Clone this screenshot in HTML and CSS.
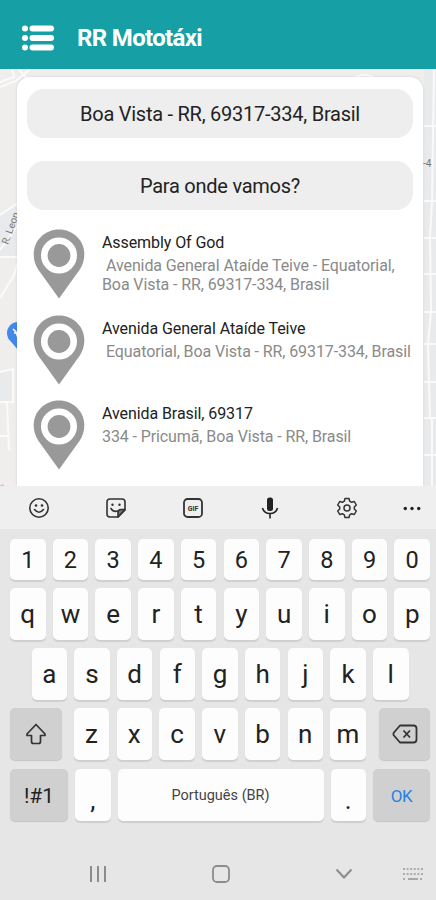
FILE: index.html
```html
<!DOCTYPE html>
<html lang="pt-BR">
<head>
    <meta charset="UTF-8">
    <meta name="viewport" content="width=device-width, initial-scale=1.0">
    <title>RR Mototáxi</title>
    <link rel="stylesheet" href="styles.css">
</head>
<body>

    <!-- Pin shape shared by the address list -->
    <svg class="defs" width="0" height="0">
        <symbol id="pin" viewBox="0 0 52 70">
            <path fill="#999" d="M26 0.5C12 0.5 0.7 11.3 0.7 25.3C0.7 31 2.3 36 5.2 40.5L26 69.5L46.8 40.5C49.7 36 51.3 31 51.3 25.3C51.3 11.3 40 0.5 26 0.5Z"/>
            <circle cx="26" cy="26.5" r="14.7" fill="#999" stroke="#fff" stroke-width="6.6"/>
        </symbol>
    </svg>

    <header class="top-bar">
        <svg class="menu-icon" width="34" height="28" viewBox="0 0 34 28" fill="#fff">
            <circle cx="4" cy="4.5" r="3"/><rect x="8.500" y="1.5" width="24.500" height="6" rx="3"/>
            <circle cx="4" cy="14" r="3"/><rect x="8.500" y="11" width="24.500" height="6" rx="3"/>
            <circle cx="4" cy="23.5" r="3"/><rect x="8.500" y="20.5" width="24.500" height="6" rx="3"/>
        </svg>
        <h1>RR Mototáxi</h1>
    </header>

    <main class="map-area">
        <!-- Streets behind the card -->
        <svg class="map" width="436" height="417" viewBox="0 69 436 417">
            <rect y="69" width="436" height="417" fill="#efeeed"/>
            <path fill="#e9eaec" d="M0 216L18 203V257H0ZM0 372L13 369V402H0ZM424 69H436V486H424Z"/>
            <g fill="none" stroke="#fafafa" stroke-width="2">
                <path d="M0 87L16 81L30 69M0 82L14 77L12 69M19 69L28 80M0 215L18 203M0 257H18M0 298L14 275L18 262M0 250L18 225"/>
                <path d="M0 372L13 369V402H0M7 402L9 450M0 436H8"/>
                <path d="M436 126H424M436 201H424M436 238H424M436 274H424M436 312H424M436 344H424M436 382H424M436 418H424M436 455H424"/>
                <path d="M434 69L432 201L430 238L431 312L428 344L430 418M432 418V486M352 79Q365 71 376 79"/>
            </g>
            <path stroke="#f0b8b8" stroke-width="1.5" d="M0 486L4 485"/>
            <circle cx="18" cy="333" r="11" fill="#4388ea"/>
            <path fill="#4388ea" d="M8 338L18 350V334Z"/>
            <path fill="none" stroke="#fff" stroke-width="1.5" d="M13 329L16 332L18 338M14 333H18"/>
            <text class="street" transform="translate(8 245) rotate(-70)">R. Leop</text>
            <text class="street" x="423" y="167">-4</text>
        </svg>

        <section class="search-card">
            <div class="field">Boa Vista - RR, 69317-334, Brasil</div>
            <div class="field field-to">Para onde vamos?</div>

            <ul class="places">
                <li>
                    <svg class="pin"><use href="#pin"/></svg>
                    <div class="place-text">
                        <h2>Assembly Of God</h2>
                        <p class="indent">Avenida General Ataíde Teive - Equatorial,</p>
                        <p class="line-2">Boa Vista - RR, 69317-334, Brasil</p>
                    </div>
                </li>
                <li>
                    <svg class="pin"><use href="#pin"/></svg>
                    <div class="place-text">
                        <h2>Avenida General Ataíde Teive</h2>
                        <p class="indent">Equatorial, Boa Vista - RR, 69317-334, Brasil</p>
                    </div>
                </li>
                <li>
                    <svg class="pin"><use href="#pin"/></svg>
                    <div class="place-text">
                        <h2>Avenida Brasil, 69317</h2>
                        <p>334 - Pricumã, Boa Vista - RR, Brasil</p>
                    </div>
                </li>
            </ul>
        </section>
    </main>

    <div class="toolbar">
        <svg width="22" height="22" viewBox="0 0 22 22" fill="none" stroke="#333" stroke-width="1.6">
            <circle cx="11" cy="11" r="9.2"/>
            <path d="M6.5 12.5Q11 18 15.5 12.5" stroke-linecap="round"/>
            <circle cx="8" cy="8.5" r="1.3" fill="#333" stroke="none"/><circle cx="14" cy="8.5" r="1.3" fill="#333" stroke="none"/>
        </svg>
        <svg width="22" height="22" viewBox="0 0 22 22" fill="none" stroke="#333" stroke-width="1.6">
            <path d="M5 2H17Q20 2 20 5V13L13 20H5Q2 20 2 17V5Q2 2 5 2Z" stroke-linejoin="round"/>
            <path d="M20 12.5H16Q13 12.5 13 15.5V20Z" fill="#777" stroke-linejoin="round"/>
            <path d="M6 11.5Q8.5 15.5 12.5 14" stroke-linecap="round"/>
            <circle cx="7.5" cy="7.8" r="1.2" fill="#333" stroke="none"/><circle cx="14.5" cy="7.8" r="1.2" fill="#333" stroke="none"/>
        </svg>
        <svg width="22" height="22" viewBox="0 0 22 22">
            <rect x="2" y="2" width="18" height="18" rx="3.5" fill="none" stroke="#333" stroke-width="1.8"/>
            <text class="gif" x="11" y="13.5" text-anchor="middle">GIF</text>
        </svg>
        <svg width="22" height="22" viewBox="0 0 22 22" fill="none" stroke="#222" stroke-width="1.6">
            <rect x="8" y="0.5" width="6" height="13.5" rx="2.5" fill="#222" stroke="none"/>
            <path d="M3.5 11Q5 16.5 11 16.5T18.5 11M11 16.5V21.5"/>
        </svg>
        <svg width="22" height="22" viewBox="0 0 22 22" fill="none" stroke="#333" stroke-width="1.5">
            <path stroke-linejoin="round" d="M9 1.5H13L13.7 4.2L15.6 5.3L18.3 4.5L20.3 8L18.3 10V12L20.3 14L18.3 17.5L15.6 16.7L13.7 17.8L13 20.5H9L8.3 17.8L6.4 16.7L3.7 17.5L1.7 14L3.7 12V10L1.7 8L3.7 4.5L6.4 5.3L8.3 4.2Z"/>
            <circle cx="11" cy="11" r="3"/>
        </svg>
        <svg class="more" width="22" height="22" viewBox="0 0 22 22" fill="#222">
            <circle cx="4.300" cy="11.5" r="1.7"/><circle cx="11" cy="11.5" r="1.7"/><circle cx="17.700" cy="11.5" r="1.7"/>
        </svg>
    </div>

    <div class="keyboard">
        <div class="row numbers">
            <span class="key">1</span><span class="key">2</span><span class="key">3</span><span class="key">4</span><span class="key">5</span><span class="key">6</span><span class="key">7</span><span class="key">8</span><span class="key">9</span><span class="key">0</span>
        </div>
        <div class="row">
            <span class="key">q</span><span class="key">w</span><span class="key">e</span><span class="key">r</span><span class="key">t</span><span class="key">y</span><span class="key">u</span><span class="key">i</span><span class="key">o</span><span class="key">p</span>
        </div>
        <div class="row middle">
            <span class="key">a</span><span class="key">s</span><span class="key">d</span><span class="key">f</span><span class="key">g</span><span class="key">h</span><span class="key">j</span><span class="key">k</span><span class="key">l</span>
        </div>
        <div class="row">
            <span class="key dark shift">
                <svg width="22" height="24" viewBox="0 0 22 24" fill="none" stroke="#333" stroke-width="1.7" stroke-linejoin="round">
                    <path d="M11 2.5L20 12V13.5H15.5V19.500Q15.5 21.500 13.500 21.500H8.500Q6.500 21.500 6.500 19.500V13.5H2V12Z"/>
                </svg>
            </span>
            <span class="key">z</span><span class="key">x</span><span class="key">c</span><span class="key">v</span><span class="key">b</span><span class="key">n</span><span class="key">m</span>
            <span class="key dark backspace">
                <svg width="26" height="20" viewBox="0 0 26 20" fill="none" stroke="#333" stroke-width="1.8" stroke-linejoin="round">
                    <path d="M8 1.5H21.5Q24.5 1.5 24.5 4.5V15.5Q24.5 18.5 21.5 18.5H8L1.5 11V9Z"/>
                    <path d="M11.5 6.5L18 13.5M18 6.5L11.5 13.5"/>
                </svg>
            </span>
        </div>
        <div class="row">
            <span class="key dark symbols">!#1</span>
            <span class="key punct">,</span>
            <span class="key space">Português (BR)</span>
            <span class="key punct">.</span>
            <span class="key dark ok">OK</span>
        </div>
    </div>

    <nav class="nav-bar">
        <svg width="18" height="18" viewBox="0 0 18 18" stroke="#8c8c8c" stroke-width="2"><path d="M2 1V17M9 1V17M16 1V17"/></svg>
        <svg width="20" height="20" viewBox="0 0 20 20" fill="none" stroke="#8c8c8c" stroke-width="1.800"><rect x="2" y="2" width="16" height="16" rx="4"/></svg>
        <svg width="18" height="12" viewBox="0 0 18 12" fill="none" stroke="#8c8c8c" stroke-width="2"><path d="M1.5 1.5L9 9.5L16.5 1.5"/></svg>
        <svg class="keyboard-icon" width="22" height="14" viewBox="0 0 22 14" stroke="#999" stroke-width="1.6"><path d="M1 2H21M1 7H21M1 12H4M18 12H21" stroke-dasharray="2 1.6"/><path d="M6 12H16"/></svg>
    </nav>

</body>
</html>
```
FILE: styles.css
```css
* {
    box-sizing: border-box;
}

body {
    margin: 0;
    width: 436px;
    height: 900px;
    overflow: hidden;
    font-family: Roboto, "Liberation Sans", sans-serif;
    background-color: #e6e6e6;
    color: #222;
}

h1, h2, p, ul {
    margin: 0;
    padding: 0;
}

.defs {
    position: absolute;
}

/* Header */
.top-bar {
    display: flex;
    align-items: center;
    height: 69px;
    padding: 6px 0 0 21px;
    background-color: #169fa4;
}

.top-bar h1 {
    margin-left: 22px;
    font-size: 24px;
    line-height: 28px;
    font-weight: 700;
    letter-spacing: -0.65px;
    color: #fff;
}

/* Map with the card over it */
.map-area {
    display: grid;
    grid-template-columns: 436px;
    height: 417px;
    overflow: hidden;
}

.map,
.search-card {
    grid-area: 1 / 1;
}

.street {
    font-size: 10px;
    fill: #777;
}

.search-card {
    z-index: 1;
    margin: 8px 13px 0 17px;
    padding: 12px 10px 0;
    border-radius: 13px 13px 0 0;
    background-color: #fff;
    box-shadow: 0 0 3px rgba(0, 0, 0, 0.12);
}

.field {
    width: 386px;
    height: 49px;
    border-radius: 17px;
    background-color: #eee;
    font-size: 20px;
    line-height: 50px;
    letter-spacing: -0.25px;
    text-align: center;
}

.field-to {
    margin-top: 23px;
}

/* Address list */
.places {
    margin-top: 19px;
    list-style: none;
}

.places li {
    display: flex;
    height: 85.5px;
}

.pin {
    width: 52px;
    height: 70px;
    margin-left: 6px;
}

.place-text {
    margin-left: 17px;
    padding-top: 4px;
    white-space: nowrap;
}

.place-text h2 {
    font-size: 16px;
    line-height: 20px;
    font-weight: 400;
    letter-spacing: -0.08px;
}

.place-text p {
    margin-top: 3px;
    font-size: 16px;
    line-height: 19px;
    letter-spacing: -0.1px;
    color: #8a8a8a;
}

.place-text .line-2 {
    margin-top: 0;
}

.place-text .indent {
    padding-left: 4px;
}

/* Keyboard */
.toolbar {
    display: grid;
    grid-template-columns: repeat(5, 77.1px) 1fr;
    align-items: center;
    justify-items: center;
    height: 43px;
    background-color: #efefef;
}

.toolbar .more {
    margin-left: 3px;
}

.gif {
    font-size: 7px;
    font-weight: 700;
    fill: #333;
}

.keyboard {
    display: flex;
    flex-direction: column;
    gap: 8.3px;
    height: 318px;
    padding: 9.5px 5px 0 10px;
}

.row {
    display: flex;
    justify-content: space-between;
    width: 420px;
    height: 52px;
}

.numbers {
    height: 41px;
}

.middle {
    width: 377px;
    margin-left: 21.5px;
}

.key {
    display: flex;
    align-items: center;
    justify-content: center;
    width: 35.5px;
    border-radius: 5px;
    background-color: #fdfdfd;
    box-shadow: 0 1.5px 1px #cfcfcf;
    font-size: 26px;
}

.numbers .key {
    padding-top: 2px;
    font-size: 23.5px;
}

.dark {
    background-color: #d0d0d0;
    box-shadow: 0 1px 1px #c4c4c4;
}

.shift {
    width: 52px;
    margin-right: 4.5px;
}

.backspace {
    width: 51px;
    margin-left: 6px;
}

.symbols {
    width: 58px;
    padding-top: 2px;
    font-size: 21px;
}

.space {
    width: 206px;
    padding-top: 2px;
    font-size: 14.5px;
    color: #444;
}

.punct {
    padding-top: 10px;
}

.ok {
    width: 57px;
    padding-top: 2px;
    font-size: 17px;
    letter-spacing: -0.5px;
    color: #2581e6;
}

/* System navigation */
.nav-bar {
    display: flex;
    align-items: center;
    gap: 104px;
    height: 54px;
    padding-left: 89px;
}

.nav-bar .keyboard-icon {
    margin-left: -55px;
}
```
